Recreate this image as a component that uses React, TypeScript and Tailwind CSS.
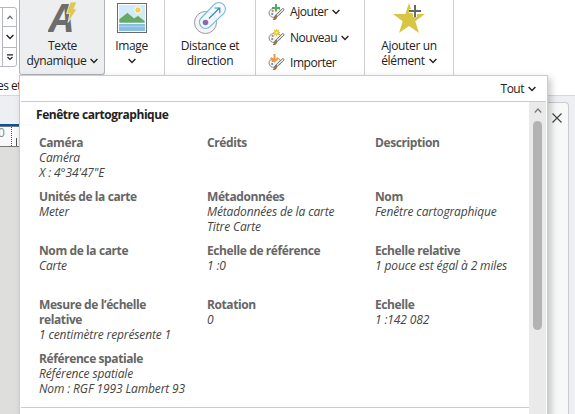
import React from "react";

function Chevron({ className = "" }: { className?: string }) {
  return (
    <svg className={`shrink-0 ${className}`} width="8" height="6" viewBox="0 0 8 6" fill="none" stroke="#222" strokeWidth="1.4">
      <path d="M0.6 1 L4 4.4 L7.4 1" />
    </svg>
  );
}

function Palette({ kind }: { kind: "add" | "new" | "import" }) {
  return (
    <svg className="shrink-0" width="17" height="17" viewBox="0 0 17 17" fill="none">
      <path d="M5.5 4.5 C2.5 5 1 7 1 9 C1 12 4 13.6 6.2 13.4 C7.6 13.2 6.7 11.4 8.2 10.8 C9.6 10.3 11 11.5 12.2 10.3 C13.5 9 12.8 5.3 10.5 4.6" fill="#f4f4f4" stroke="#888" strokeWidth="1" />
      <circle cx="4.7" cy="7" r="1.1" fill="#df765e" />
      <circle cx="4.2" cy="10" r="1.1" fill="#4d91c7" />
      <path d="M14.7 4.5 C16 4.5 16.3 5.7 15.4 6.8 L9.2 12.4 L7.8 11 Z" fill="#e7e7e7" stroke="#777" strokeWidth="1" />
      <path d="M7.8 10.8 L9.5 12.4 C9 15 7 16.3 4.6 16 C6.2 14.6 5.8 12.1 7.8 10.8 Z" fill="#9b704d" />
      {kind === "add" && <path d="M8 0 V7.5 M4 4 H12" stroke="#5aa764" strokeWidth="2" />}
      {kind === "new" && (
        <g stroke="#dfc641" strokeWidth="1.1">
          <path d="M8.5 0 V7 M5 3.5 H12 M6 1 L11 6 M11 1 L6 6" />
          <circle cx="8.5" cy="3.5" r="1.6" fill="#fff2a6" />
        </g>
      )}
      {kind === "import" && <path d="M6.5 0 V7 M2.8 3.8 L6.5 7.4 L10.2 3.8" stroke="#ee9a43" strokeWidth="2" />}
    </svg>
  );
}

function DynamicTextIcon() {
  return (
    <svg className="mx-auto" width="30" height="34" viewBox="0 0 30 34">
      <text x="1.5" y="32" fontSize="39" fontFamily="Open Sans" fontWeight="700" fontStyle="italic" fill="#6d6d6d">A</text>
      <path d="M22.3 2 H28.6 L26 9 H29 L20 22.5 L21.8 13.5 H18.6 Z" fill="#dfc84e" stroke="#eceef0" strokeWidth="0.8" />
    </svg>
  );
}

function PictureIcon() {
  return (
    <svg className="mx-auto mb-px" width="30" height="30" viewBox="0 0 30 30">
      <rect x="0.5" y="0.5" width="29" height="29" fill="#fff" stroke="#6b6b6b" />
      <rect x="2" y="2" width="26" height="18" fill="#d2eafa" />
      <circle cx="21" cy="7" r="3.3" fill="#ebd35a" stroke="#fff" />
      <path d="M2 20 V16 L10.5 9.5 L17 15 L21 12.5 L28 18 V20 Z" fill="#65aa69" stroke="#fff" strokeWidth="0.5" />
      <rect x="2" y="21" width="26" height="7" fill="#87bfe4" />
      <path d="M2 23.5 H28" stroke="#a8d3ef" />
    </svg>
  );
}

function DistanceIcon() {
  return (
    <svg className="mx-auto" width="34" height="34" viewBox="0 0 34 34" fill="none">
      <circle cx="12.5" cy="22.5" r="11" fill="#f5f5f5" stroke="#9b9b9b" />
      <path d="M8.2 18 L21.2 4.4 A6.6 6.6 0 0 1 31 13.2 L17 26.6 A6 6 0 0 1 8.2 18 Z" fill="#f4f9fc" fillOpacity=".8" stroke="#74b8df" strokeWidth="1.1" />
      <circle cx="12.5" cy="22.5" r="2.8" fill="#876bb1" />
      <path d="M16 18.5 L26.5 8 M21.5 8 H26.8 V13.2" stroke="#388bc1" strokeWidth="1.2" />
    </svg>
  );
}

function StarIcon() {
  return (
    <svg className="mx-auto" width="34" height="32" viewBox="0 0 34 32">
      <path d="M17 1 L20.7 12 H33 L23.3 19.3 L27 31 L17 24 L7 31 L10.7 19.3 L1 12 H13.3 Z" fill="#d9c545" />
      <path d="M23 3 V15 M17 9 H29" stroke="#fff" strokeWidth="4" />
      <path d="M23 3 V15 M17 9 H29" stroke="#666" strokeWidth="2" />
    </svg>
  );
}

function Tool({ icon, first, second, arrow, className }: {
  icon: React.ReactNode; first: string; second?: string; arrow?: boolean; className: string;
}) {
  return (
    <button className={`flex shrink-0 flex-col text-center leading-[15px] tracking-[-0.35px] ${className}`}>
      <span className="mb-1 flex h-[34px] w-full items-end">{icon}</span>
      <span className="block w-full">{first}</span>
      <span className="flex h-[15px] w-full items-center justify-center gap-1">
        {second && <span>{second}</span>}
        {arrow && <Chevron className="mt-px" />}
      </span>
    </button>
  );
}

function Action({ kind, label, arrow }: { kind: "add" | "new" | "import"; label: string; arrow?: boolean }) {
  return (
    <button className="flex h-[26px] items-center">
      <Palette kind={kind} />
      <span className="ml-[5px] tracking-[-0.45px]">{label}</span>
      {arrow && <Chevron className="ml-1" />}
    </button>
  );
}

type Entry = { title: string[]; lines: string[] };

const entries: Entry[] = [
  { title: ["Caméra"], lines: ["Caméra", "X : 4°34'47\"E"] },
  { title: ["Crédits"], lines: [] },
  { title: ["Description"], lines: [] },
  { title: ["Unités de la carte"], lines: ["Meter"] },
  { title: ["Métadonnées"], lines: ["Métadonnées de la carte", "Titre Carte"] },
  { title: ["Nom"], lines: ["Fenêtre cartographique"] },
  { title: ["Nom de la carte"], lines: ["Carte"] },
  { title: ["Echelle de référence"], lines: ["1 :0"] },
  { title: ["Echelle relative"], lines: ["1 pouce est égal à 2 miles"] },
  { title: ["Mesure de l’échelle", "relative"], lines: ["1 centimètre représente 1"] },
  { title: ["Rotation"], lines: ["0"] },
  { title: ["Echelle"], lines: ["1 :142 082"] },
  { title: ["Référence spatiale"], lines: ["Référence spatiale", "Nom : RGF 1993 Lambert 93"] },
];

function Ribbon() {
  return (
    <header className="flex h-[95px] bg-white">
      <div className="w-[19px] shrink-0 overflow-hidden pt-[7px]">
        <div className="-ml-1 h-[60px] w-[21px] rounded-[3px] border border-[#b5b9bd] pl-[5px]">
          <div className="grid h-full grid-rows-[19px_21px_18px] border-l border-[#b5b9bd]">
            <div className="flex items-center justify-center border-b border-[#b5b9bd]">
              <svg width="6" height="5" viewBox="0 0 6 5" fill="none" stroke="#666" strokeWidth="1.2"><path d="M0.5 4 L3 1.2 L5.5 4" /></svg>
            </div>
            <div className="flex items-center justify-center border-b border-[#b5b9bd]"><Chevron /></div>
            <div className="flex items-center justify-center">
              <svg width="6" height="7" viewBox="0 0 6 7" fill="none" stroke="#222" strokeWidth="1.2"><path d="M0 .8 H6 M.5 3 L3 5.5 L5.5 3" /></svg>
            </div>
          </div>
        </div>
        <div className="mt-[11px] -ml-[3px] leading-[16px] tracking-[-0.5px] whitespace-nowrap">es et</div>
      </div>
      <div className="flex h-[75px] flex-1">
        <Tool className="h-[75px] w-[86px] rounded-b-[3px] border border-t-0 border-[#b0b4b9] bg-[#eceef0] pl-px" icon={<DynamicTextIcon />} first="Texte" second="dynamique" arrow />
        <Tool className="w-[60px] border-r border-[#d0d0d0] pr-[6px]" icon={<PictureIcon />} first="Image" arrow />
        <Tool className="w-[91px] border-r border-[#d0d0d0]" icon={<DistanceIcon />} first="Distance et" second="direction" />
        <div className="flex w-[109px] shrink-0 flex-col border-r border-[#d0d0d0] pl-3">
          <div className="-mt-px"><Action kind="add" label="Ajouter" arrow /></div>
          <Action kind="new" label="Nouveau" arrow />
          <Action kind="import" label="Importer" />
        </div>
        <Tool className="w-[89px] border-r border-[#d0d0d0]" icon={<StarIcon />} first="Ajouter un" second="élément" arrow />
      </div>
    </header>
  );
}

function Workspace() {
  return (
    <main className="flex h-[319px] justify-between border-t border-[#d5d7d9] bg-[#eeeff2]">
      <div className="flex w-[19px] flex-col overflow-hidden pt-[28px]">
        <div className="h-[2px] bg-[#0057a5]" />
        <div className="flex h-[21px] border-y border-[#777] bg-[#f8f9f8] text-[#8a8a8a]">
          <span className="-ml-[2px] w-[13px] leading-[12px]">0</span>
          <span className="border-l border-dotted border-[#555]" />
          <span className="mt-[11px] ml-1 border-l border-[#555]" />
        </div>
        <div className="flex-1 bg-[#dededc]" />
      </div>
      <div className="flex w-[28px] pt-[6px]">
        <aside className="w-[22px] rounded-tr-[4px] border-t border-r border-[#c9cbd0] bg-[#f7f9f8] pt-[10px] pl-[5px]">
          <svg width="10" height="10" viewBox="0 0 10 10" stroke="#444" strokeWidth="1.2"><path d="M.5 .5 L9.5 9.5 M9.5 .5 L.5 9.5" /></svg>
        </aside>
      </div>
    </main>
  );
}

export default function App() {
  return (
    <div className="relative h-[414px] w-[575px] overflow-hidden bg-white font-['Open_Sans','Noto_Sans',sans-serif] text-[12px] text-[#222]">
      <Ribbon />
      <Workspace />
      <div className="absolute top-[75px] left-[19px] h-[345px] w-[529px] border border-[#ccc] bg-white px-[1px] shadow-[3px_3px_7px_rgba(0,0,0,0.22)]">
        <div className="flex h-[26px] items-center justify-end gap-1 border-b border-[#ccc] pr-[10px]">
          <span className="tracking-[-0.5px]">Tout</span><Chevron className="mt-px" />
        </div>
        <div className="flex h-[312px]">
          <section className="flex-1">
            <div className="h-[305px] pt-[5px]">
              <h2 className="pl-[15px] leading-[16px] font-bold tracking-[-0.45px] whitespace-nowrap text-[#222]">Fenêtre cartographique</h2>
              <div className="mt-[12px] grid auto-rows-[54px] grid-cols-[168px_168px_154px] pl-[18px] leading-[15px]">
                {entries.map((entry, i) => (
                  <div key={i} className="whitespace-nowrap">
                    {entry.title.map((t) => <div key={t} className="font-bold tracking-[-0.4px] text-[#666]">{t}</div>)}
                    {entry.lines.map((t) => <div key={t} className="tracking-[-0.13px] text-[#444] italic">{t}</div>)}
                  </div>
                ))}
              </div>
            </div>
            <div className="border-t border-[#ccc]" />
          </section>
          <div className="flex w-[17px] flex-col items-center bg-[#eaeaea] pt-[6px]">
            <svg width="8" height="6" viewBox="0 0 8 6" fill="none" stroke="#777" strokeWidth="1.2"><path d="M.8 4.5 L4 1 L7.2 4.5" /></svg>
            <div className="mt-[7px] h-[209px] w-[9px] rounded-full bg-[#b3b3b3]" />
          </div>
        </div>
      </div>
    </div>
  );
}
